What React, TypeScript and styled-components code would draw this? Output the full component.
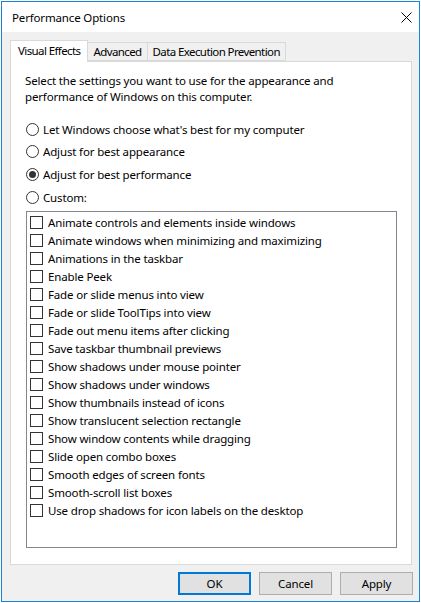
import styled, { createGlobalStyle } from 'styled-components';

const GlobalStyle = createGlobalStyle`
  html, body {
    margin: 0;
    padding: 0;
    background: #ffffff;
  }
  body {
    font-family: 'Noto Sans', 'Segoe UI', sans-serif;
    font-size: 11.5px;
    letter-spacing: -0.15px;
    color: #000;
  }
`;

const effects = [
  'Animate controls and elements inside windows',
  'Animate windows when minimizing and maximizing',
  'Animations in the taskbar',
  'Enable Peek',
  'Fade or slide menus into view',
  'Fade or slide ToolTips into view',
  'Fade out menu items after clicking',
  'Save taskbar thumbnail previews',
  'Show shadows under mouse pointer',
  'Show shadows under windows',
  'Show thumbnails instead of icons',
  'Show translucent selection rectangle',
  'Show window contents while dragging',
  'Slide open combo boxes',
  'Smooth edges of screen fonts',
  'Smooth-scroll list boxes',
  'Use drop shadows for icon labels on the desktop',
];

const options = [
  { label: "Let Windows choose what's best for my computer", checked: false },
  { label: 'Adjust for best appearance', checked: false },
  { label: 'Adjust for best performance', checked: true },
  { label: 'Custom:', checked: false },
];

const App = () => {
  return (
    <>
      <GlobalStyle />
      <Window>
        <TitleBar>
          <Title>Performance Options</Title>
          <CloseButton>
            <svg width="11" height="11" viewBox="0 0 11 11">
              <path d="M0.5 0.5 L10.5 10.5 M10.5 0.5 L0.5 10.5" stroke="#000" strokeWidth="1" />
            </svg>
          </CloseButton>
        </TitleBar>
        <Body>
          <TabRow>
            <Tab $active>Visual Effects</Tab>
            <Tab>Advanced</Tab>
            <Tab>Data Execution Prevention</Tab>
          </TabRow>
          <Panel>
            <Intro>
              Select the settings you want to use for the appearance and
              <br />
              performance of Windows on this computer.
            </Intro>
            <RadioGroup>
              {options.map((o) => (
                <RadioRow key={o.label}>
                  <Radio $checked={o.checked} />
                  <span>{o.label}</span>
                </RadioRow>
              ))}
            </RadioGroup>
            <ListBox>
              {effects.map((e) => (
                <CheckRow key={e}>
                  <CheckBox />
                  <span>{e}</span>
                </CheckRow>
              ))}
            </ListBox>
          </Panel>
          <ButtonRow>
            <Button $default>OK</Button>
            <Button>Cancel</Button>
            <Button>Apply</Button>
          </ButtonRow>
        </Body>
      </Window>
    </>
  );
};

export default App;

const Window = styled.div`
  box-sizing: border-box;
  width: 419px;
  height: 601px;
  margin: 1px 0 0 1px;
  border: 1px solid #1883d7;
  background: #f0f0f0;
  display: flex;
  flex-direction: column;
`;

const TitleBar = styled.div`
  height: 30px;
  background: #ffffff;
  display: flex;
  align-items: center;
  justify-content: space-between;
  padding: 0 0 0 10px;
`;

const Title = styled.div`
  font-size: 11.5px;
  padding-top: 1px;
`;

const CloseButton = styled.div`
  width: 26px;
  height: 30px;
  display: flex;
  align-items: center;
  justify-content: center;
  padding-top: 1px;
`;

const Body = styled.div`
  display: flex;
  flex-direction: column;
  padding: 8px 6px 0 8px;
`;

const TabRow = styled.div`
  display: flex;
  align-items: flex-end;
  height: 21px;
  position: relative;
  z-index: 1;
`;

const Tab = styled.div<{ $active?: boolean }>`
  box-sizing: border-box;
  height: ${(p) => (p.$active ? '22px' : '19px')};
  padding: 0 ${(p) => (p.$active ? '7px' : '5px')};
  margin-bottom: ${(p) => (p.$active ? '-1px' : '0')};
  display: flex;
  align-items: ${(p) => (p.$active ? 'flex-start' : 'center')};
  padding-top: ${(p) => (p.$active ? '2px' : '0')};
  background: ${(p) => (p.$active ? '#ffffff' : '#f0f0f0')};
  border: 1px solid #d9d9d9;
  border-bottom: ${(p) => (p.$active ? 'none' : '1px solid #d9d9d9')};
  letter-spacing: -0.6px;
  & + & {
    border-left: none;
  }
  white-space: nowrap;
`;

const Panel = styled.div`
  box-sizing: border-box;
  width: 402px;
  height: 504px;
  background: #ffffff;
  border: 1px solid #d9d9d9;
  padding: 11px 0 0 14px;
  display: flex;
  flex-direction: column;
`;

const Intro = styled.div`
  line-height: 16px;
`;

const RadioGroup = styled.div`
  display: flex;
  flex-direction: column;
  margin-top: 13px;
`;

const RadioRow = styled.div`
  display: flex;
  align-items: center;
  height: 22.6px;
  gap: 4px;
  margin-left: 1px;
`;

const Radio = styled.div<{ $checked?: boolean }>`
  box-sizing: border-box;
  width: 13px;
  height: 13px;
  border-radius: 50%;
  border: 1px solid #333333;
  display: flex;
  align-items: center;
  justify-content: center;
  &::after {
    content: '';
    display: ${(p) => (p.$checked ? 'block' : 'none')};
    width: 7px;
    height: 7px;
    border-radius: 50%;
    background: #333333;
  }
`;

const ListBox = styled.div`
  box-sizing: border-box;
  width: 371px;
  height: 337px;
  margin: 3px 0 0 1px;
  border: 1px solid #828790;
  padding: 1px 0 0 3px;
  display: flex;
  flex-direction: column;
`;

const CheckRow = styled.div`
  display: flex;
  align-items: center;
  height: 18px;
  gap: 5px;
`;

const CheckBox = styled.div`
  box-sizing: border-box;
  width: 13px;
  height: 13px;
  border: 1px solid #333333;
  background: #ffffff;
`;

const ButtonRow = styled.div`
  display: flex;
  justify-content: flex-end;
  gap: 8px;
  margin-top: 7px;
`;

const Button = styled.div<{ $default?: boolean }>`
  box-sizing: border-box;
  width: 73px;
  height: 23px;
  background: #e1e1e1;
  border: ${(p) => (p.$default ? '2px solid #0078d7' : '1px solid #adadad')};
  display: flex;
  align-items: center;
  justify-content: center;
`;
